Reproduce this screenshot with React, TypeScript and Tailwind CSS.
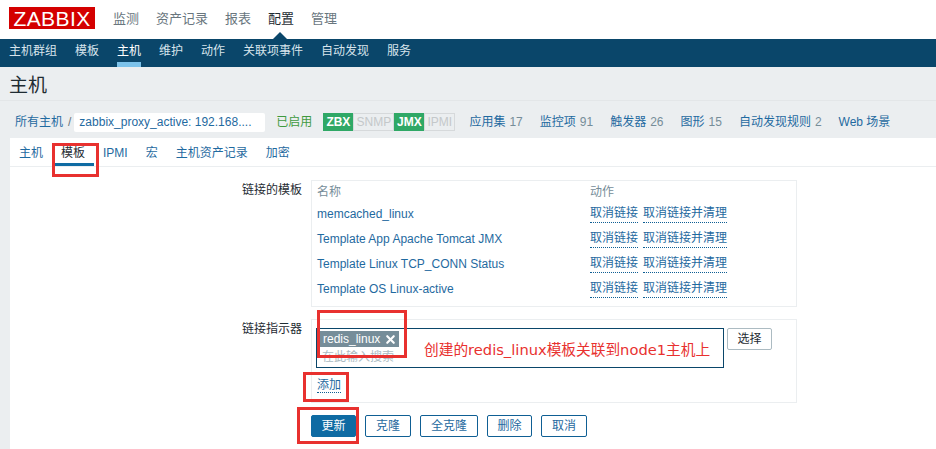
import { X } from 'lucide-react';

const cjk = 'font-["Liberation_Sans","Noto_Sans_CJK_SC",sans-serif]';

const topMenu = ['监测', '资产记录', '报表', '配置', '管理'];

const subMenu = ['主机群组', '模板', '主机', '维护', '动作', '关联项事件', '自动发现', '服务'];

const stats = [
  { label: '应用集', count: '17' },
  { label: '监控项', count: '91' },
  { label: '触发器', count: '26' },
  { label: '图形', count: '15' },
  { label: '自动发现规则', count: '2' },
  { label: 'Web 场景', count: '' },
];

const tabs = ['主机', '模板', 'IPMI', '宏', '主机资产记录', '加密'];

const templates = [
  'memcached_linux',
  'Template App Apache Tomcat JMX',
  'Template Linux TCP_CONN Status',
  'Template OS Linux-active',
];

const actions = [
  { label: '克隆', width: 'w-[46px]' },
  { label: '全克隆', width: 'w-[58px]' },
  { label: '删除', width: 'w-[45px]' },
  { label: '取消', width: 'w-[46px]' },
];

function Badge({ text, on, width }: { text: string; on: boolean; width: string }) {
  return (
    <span
      className={`flex h-[18px] items-center justify-center border text-[12px] leading-none ${width} ${
        on ? 'border-[#2fa866] bg-[#2fa866] font-bold text-white' : 'border-[#d6d9db] text-[#c4c8ca]'
      }`}
    >
      {text}
    </span>
  );
}

function DottedLink({ children }: { children: string }) {
  return <a className="border-b border-dotted border-[#0f5f94] text-[#1f6aa0]">{children}</a>;
}

export default function App() {
  return (
    <div className={`relative h-[449px] w-[936px] overflow-hidden bg-[#ebeef0] text-[12px] ${cjk}`}>
      {/* top bar */}
      <header className="relative flex h-[39px] items-start bg-white pl-[9px]">
        <div className="mt-[7px] flex h-[22px] w-[86px] items-center justify-center bg-[#d40000] text-[21px] leading-none tracking-[0.4px] text-white">
          ZABBIX
        </div>
        <nav className="ml-[18px] mt-[9px] flex gap-[17px] text-[13px] leading-[20px] text-[#69767e]">
          {topMenu.map((item) => (
            <span key={item} className={item === '配置' ? 'text-[#1f2c33]' : ''}>
              {item}
            </span>
          ))}
        </nav>
        <span className="absolute bottom-0 left-[273px] h-0 w-0 border-x-[7px] border-b-[7px] border-x-transparent border-b-[#0a466a]" />
      </header>

      <nav className="flex h-[28px] gap-[18px] bg-[#0a466a] pl-[9px] text-[12px] text-[#d8e4ec]">
        {subMenu.map((item) => (
          <span
            key={item}
            className={`h-[28px] pt-[4px] leading-[16px] ${
              item === '主机' ? 'border-b-[5px] border-[#7cc2ea] text-white' : ''
            }`}
          >
            {item}
          </span>
        ))}
      </nav>

      <h1 className="h-[34px] border-b border-[#e3e6e8] pl-[9px] pt-[6px] text-[19px] leading-[26px] text-[#1f2c33]">
        主机
      </h1>

      {/* host breadcrumb and links */}
      <div className="mt-[9px] flex h-[24px] items-center pl-[15px]">
        <span className="text-[#1f6aa0]">所有主机</span>
        <span className="ml-[5px] text-[#69767e]">/</span>
        <span className="ml-[3px] flex h-[19px] w-[191px] items-center rounded-[2px] bg-white pl-[5px] text-[#1f6aa0]">
          zabbix_proxy_active: 192.168....
        </span>
        <span className="ml-[11px] text-[#3f9a3f]">已启用</span>
        <div className="ml-[11px] flex">
          <Badge text="ZBX" on width="w-[30px]" />
          <Badge text="SNMP" on={false} width="w-[41px]" />
          <Badge text="JMX" on width="w-[30px]" />
          <Badge text="IPMI" on={false} width="w-[31px]" />
        </div>
        <div className="ml-[14px] flex gap-[17px]">
          {stats.map((s) => (
            <span key={s.label} className="whitespace-nowrap text-[#1f6aa0]">
              {s.label}
              {s.count && <span className="ml-[4px] text-[#768d99]">{s.count}</span>}
            </span>
          ))}
        </div>
      </div>

      {/* form card */}
      <section className="ml-[10px] mt-[4px] h-[312px] bg-white">
        <div className="flex h-[29px] gap-[18px] border-b border-[#ebeef0] pl-[9px] text-[#1f6aa0]">
          {tabs.map((tab) => (
            <span
              key={tab}
              className={`h-[28px] pt-[7px] leading-[16px] ${
                tab === '模板' ? 'relative text-[#1f2c33]' : ''
              }`}
            >
              {tab}
              {tab === '模板' && (
                <span className="absolute -left-[8px] -right-[9px] bottom-0 h-[3px] bg-[#0f6ba3]" />
              )}
            </span>
          ))}
        </div>

        <div className="mt-[13px] flex">
          <div className="w-[292px] pt-[2px] text-right leading-[16px] text-[#1f2c33]">链接的模板</div>
          <div className="ml-[9px] h-[127px] w-[486px] border border-[#ebeef0] pl-[5px]">
            <div className="flex h-[20px] items-end text-[#768d99]">
              <span className="w-[273px]">名称</span>
              <span>动作</span>
            </div>
            {templates.map((name) => (
              <div key={name} className="flex h-[25px] items-center">
                <span className="w-[273px] text-[#1f6aa0]">{name}</span>
                <span className="flex gap-[5px]">
                  <DottedLink>取消链接</DottedLink>
                  <DottedLink>取消链接并清理</DottedLink>
                </span>
              </div>
            ))}
          </div>
        </div>

        <div className="mt-[12px] flex">
          <div className="w-[292px] pt-[2px] text-right leading-[16px] text-[#1f2c33]">链接指示器</div>
          <div className="ml-[9px] h-[84px] w-[486px] border border-[#ebeef0] pl-[4px] pt-[8px]">
            <div className="flex items-start">
              <div className="h-[40px] w-[408px] border border-[#0a466a] pl-[2px] pt-[2px]">
                <span className="flex h-[16px] w-[80px] items-center justify-between bg-[#768d99] pl-[4px] pr-[2px] leading-none text-white">
                  redis_linux
                  <X size={13} strokeWidth={4} />
                </span>
                <span className="mt-[2px] block pl-[3px] leading-[16px] text-[#acbbc2]">在此输入搜索</span>
              </div>
              <button className="ml-[3px] h-[22px] w-[45px] rounded-[2px] border border-[#acbbc2] bg-white text-[#1f2c33]">
                选择
              </button>
            </div>
            <div className="ml-[1px] mt-[8px]">
              <DottedLink>添加</DottedLink>
            </div>
          </div>
        </div>

        <div className="ml-[301px] mt-[12px] flex gap-[9px]">
          <button className="h-[22px] w-[45px] rounded-[2px] border border-[#0f6ba3] bg-[#0f6ba3] text-white">
            更新
          </button>
          {actions.map((a) => (
            <button
              key={a.label}
              className={`h-[22px] rounded-[2px] border border-[#0f5f94] bg-white text-[#1f6aa0] ${a.width}`}
            >
              {a.label}
            </button>
          ))}
        </div>
      </section>

      {/* annotations drawn on the screenshot */}
      <div className="absolute left-[52px] top-[143px] h-[34px] w-[47px] border-[3px] border-[#e8312f]" />
      <div className="absolute left-[317px] top-[310px] h-[48px] w-[90px] border-[3px] border-[#e8312f]" />
      <div className="absolute left-[303px] top-[372px] h-[30px] w-[46px] border-[3px] border-[#e8312f]" />
      <div className="absolute left-[297px] top-[407px] h-[37px] w-[62px] border-[3px] border-[#e8312f]" />
      <div className='absolute left-[424px] top-[340px] font-["DejaVu_Sans","Noto_Sans_CJK_SC",sans-serif] text-[14.7px] leading-[20px] text-[#e8312f]'>
        创建的redis_linux模板关联到node1主机上
      </div>
    </div>
  );
}
